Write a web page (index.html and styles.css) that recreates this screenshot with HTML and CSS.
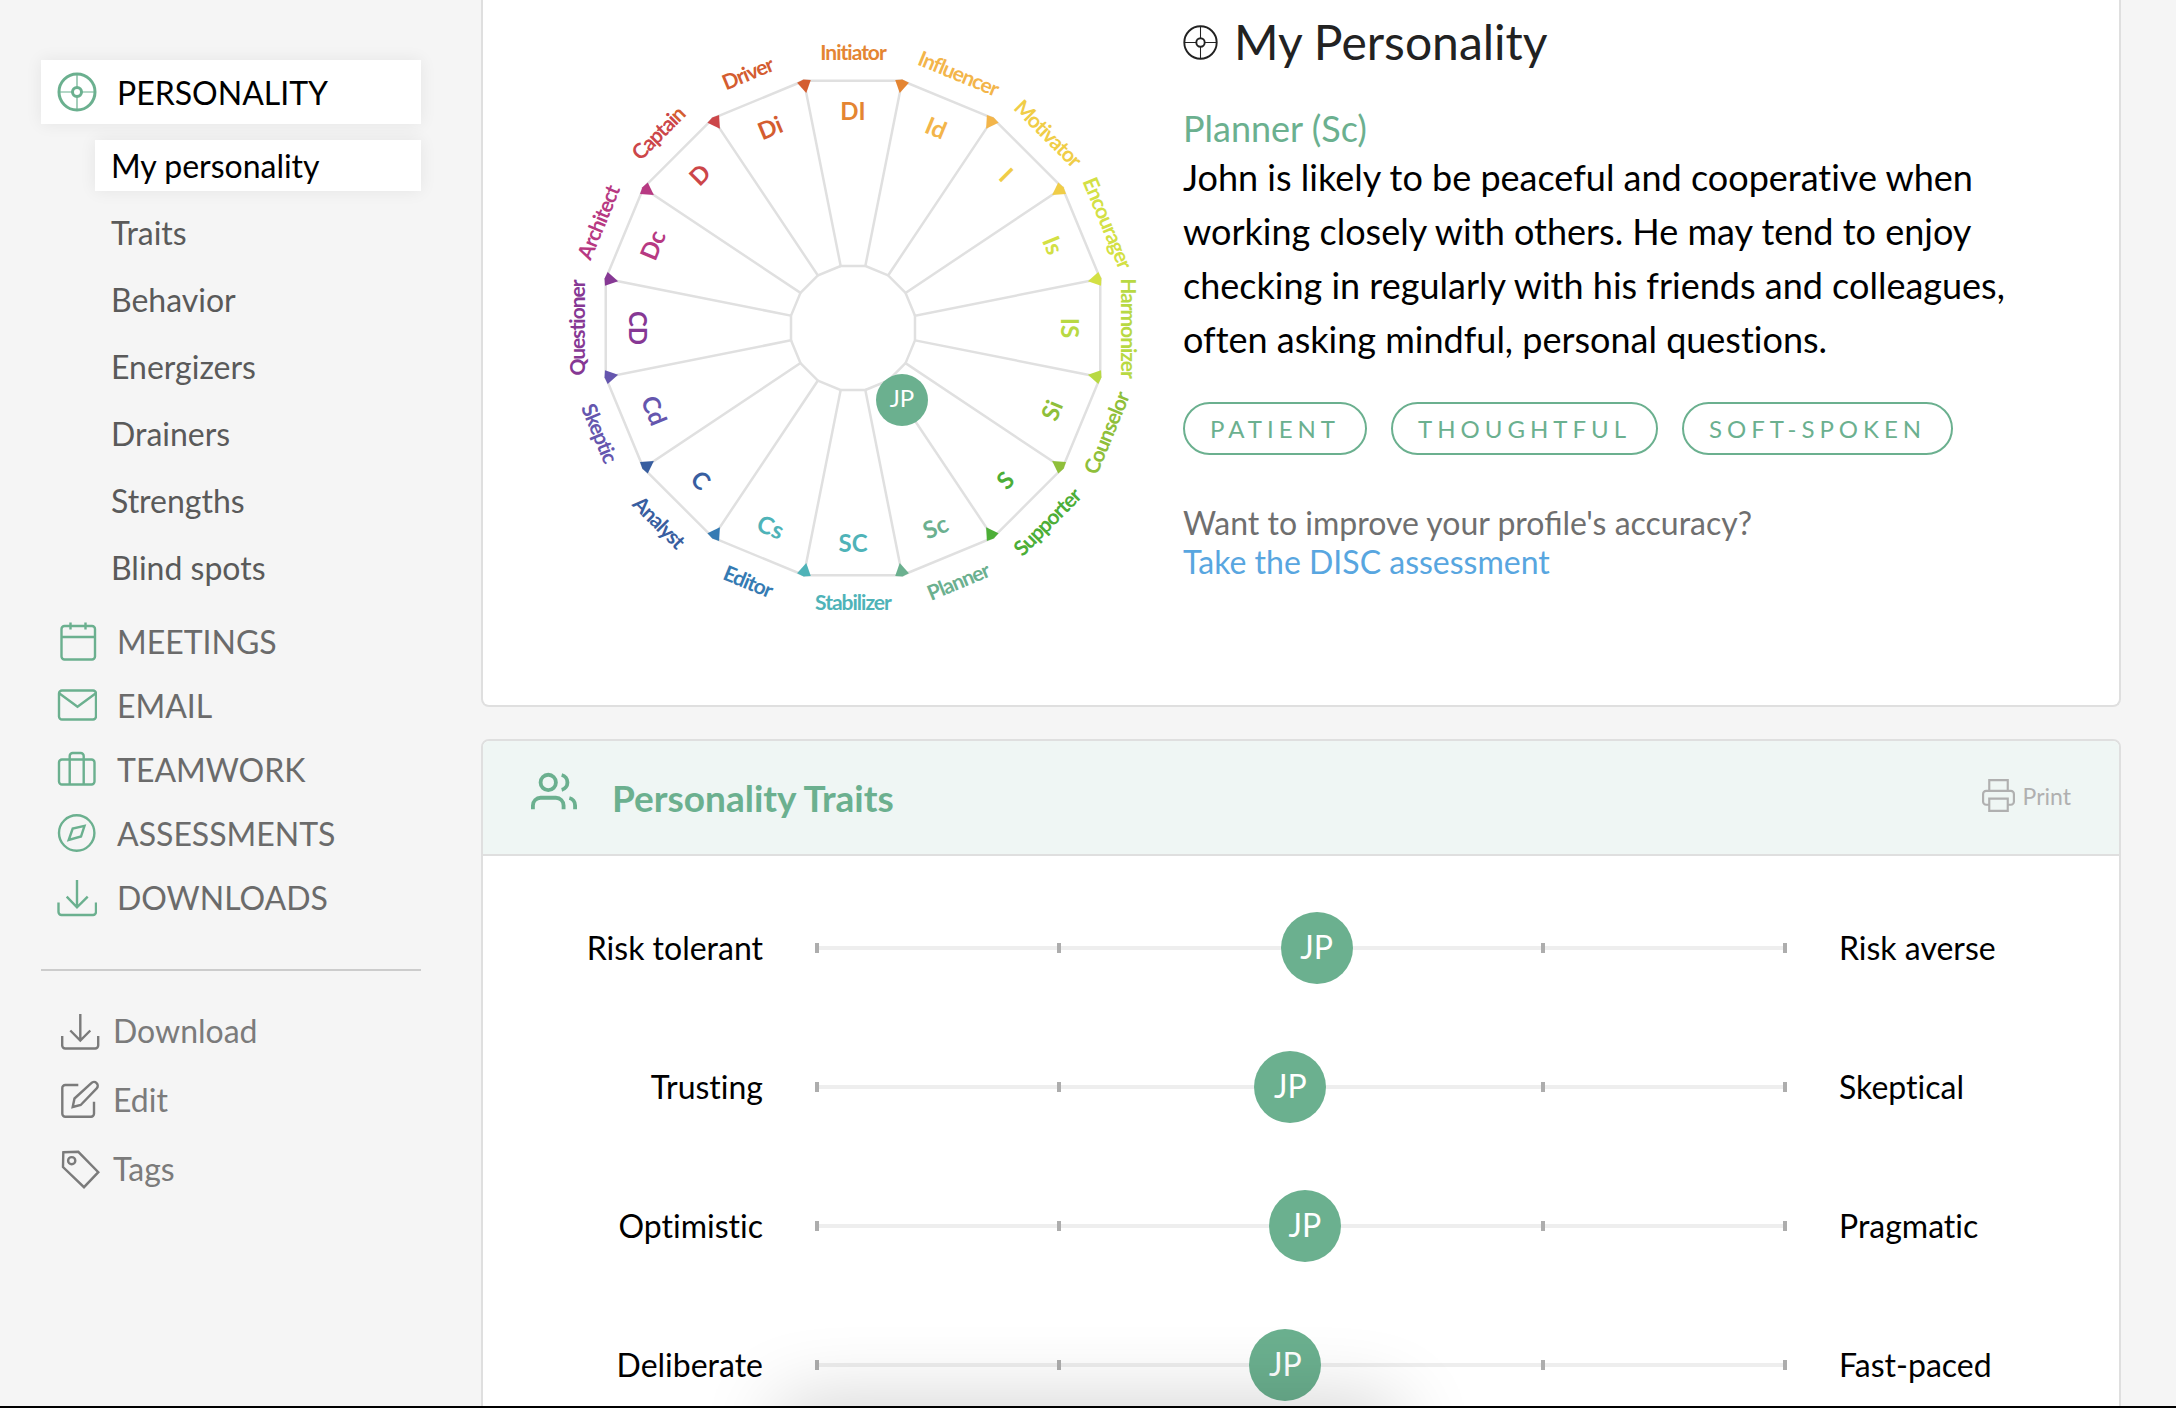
FILE: index.html
```html
<!DOCTYPE html>
<html lang="en">
<head>
<meta charset="utf-8">
<title>My Personality</title>
<link rel="stylesheet" href="styles.css">
</head>
<body>
<div class="page">
  <aside class="sidebar">
    <nav class="nav" aria-label="Profile sections">
      <a class="nav-item active" href="#personality">
        <svg class="icon target" viewBox="0 0 40 40" aria-hidden="true"><circle cx="20" cy="20" r="18"/><circle cx="20" cy="20" r="4.500"/><path class="thin" d="M20 2v13M20 25v13M2 20h13M25 20h13"/></svg>
        PERSONALITY</a>
      <div class="subnav">
        <a class="sub-item active" href="#my-personality">My personality</a>
        <a class="sub-item" href="#traits">Traits</a>
        <a class="sub-item" href="#behavior">Behavior</a>
        <a class="sub-item" href="#energizers">Energizers</a>
        <a class="sub-item" href="#drainers">Drainers</a>
        <a class="sub-item" href="#strengths">Strengths</a>
        <a class="sub-item" href="#blind-spots">Blind spots</a>
      </div>
      <a class="nav-item" href="#meetings">
        <svg class="icon" viewBox="0 0 40 40" aria-hidden="true"><rect x="4.500" y="5" width="33.500" height="33.500" rx="3"/><path d="M13.500 1.500v7M28.500 1.500v7M4.500 16H38"/></svg>
        MEETINGS</a>
      <a class="nav-item" href="#email">
        <svg class="icon" viewBox="0 0 40 40" aria-hidden="true"><rect x="2" y="5.500" width="37" height="29" rx="3"/><path d="M2.500 8.500l18 13.300 18-13.300"/></svg>
        EMAIL</a>
      <a class="nav-item" href="#teamwork">
        <svg class="icon" viewBox="0 0 40 40" aria-hidden="true"><rect x="2" y="10.500" width="35.500" height="25" rx="3"/><path d="M12.700 35.500V7a3 3 0 0 1 3-3h8a3 3 0 0 1 3 3v28.500"/></svg>
        TEAMWORK</a>
      <a class="nav-item" href="#assessments">
        <svg class="icon" viewBox="0 0 40 40" aria-hidden="true"><circle cx="19.700" cy="20" r="17.700"/><path d="M27.500 12.800L15.700 15.500l-4 11.500L24 23.500z"/></svg>
        ASSESSMENTS</a>
      <a class="nav-item" href="#downloads">
        <svg class="icon" viewBox="0 0 40 40" aria-hidden="true"><path d="M20 3v27M9.700 19.600L20 30.300l10.700-10.700M1.500 25.500V35a3 3 0 0 0 3 3H36a3 3 0 0 0 3-3v-9.500"/></svg>
        DOWNLOADS</a>
    </nav>
    <hr class="divider">
    <div class="actions">
      <a class="action" href="#download">
        <svg class="icon" viewBox="0 0 40 40" aria-hidden="true"><path d="M20.300 3v26.500M10.300 19.500l10 10 10-10M2.200 25v9.500a3 3 0 0 0 3 3h30a3 3 0 0 0 3-3V25"/></svg>
        Download</a>
      <a class="action" href="#edit">
        <svg class="icon" viewBox="0 0 40 40" aria-hidden="true"><path d="M18.300 5H5.300a3 3 0 0 0-3 3v25.700a3 3 0 0 0 3 3H31a3 3 0 0 0 3-3v-12"/><path d="M12.700 27l1.800-8.500L31.300 3.200a3.700 3.700 0 0 1 5.400 5.200L20.700 25z"/></svg>
        Edit</a>
      <a class="action" href="#tags">
        <svg class="icon" viewBox="0 0 40 40" aria-hidden="true"><path d="M3.300 3.300l15-.5 20 20.400L24 38.200 3 18z"/><circle cx="11.700" cy="11.700" r="3.600"/></svg>
        Tags</a>
    </div>
  </aside>

  <main class="main">
    <section class="card intro" id="my-personality">
      <svg class="wheel" viewBox="-310 -310 620 620" role="img" aria-label="DISC personality wheel">
        <defs>
          <path id="spoke" d="M24.200 -58.400L0 -63.200V-252.100L96.500 -232.900"/>
          <path id="marker" d="M-7 -251.500L0 -253.300L7 -251.500L0 -239.500z"/>
        </defs>
        <g class="grid">
          <use href="#spoke" transform="rotate(11.25)"/><use href="#spoke" transform="rotate(33.75)"/>
          <use href="#spoke" transform="rotate(56.25)"/><use href="#spoke" transform="rotate(78.75)"/>
          <use href="#spoke" transform="rotate(101.25)"/><use href="#spoke" transform="rotate(123.75)"/>
          <use href="#spoke" transform="rotate(146.25)"/><use href="#spoke" transform="rotate(168.75)"/>
          <use href="#spoke" transform="rotate(191.25)"/><use href="#spoke" transform="rotate(213.75)"/>
          <use href="#spoke" transform="rotate(236.25)"/><use href="#spoke" transform="rotate(258.75)"/>
          <use href="#spoke" transform="rotate(281.25)"/><use href="#spoke" transform="rotate(303.75)"/>
          <use href="#spoke" transform="rotate(326.25)"/><use href="#spoke" transform="rotate(348.75)"/>
        </g>
        <use href="#marker" class="initiator" transform="rotate(11.25)"/>
        <use href="#marker" class="influencer" transform="rotate(33.75)"/>
        <use href="#marker" class="motivator" transform="rotate(56.25)"/>
        <use href="#marker" class="encourager" transform="rotate(78.75)"/>
        <use href="#marker" class="harmonizer" transform="rotate(101.25)"/>
        <use href="#marker" class="counselor" transform="rotate(123.75)"/>
        <use href="#marker" class="supporter" transform="rotate(146.25)"/>
        <use href="#marker" class="planner" transform="rotate(168.75)"/>
        <use href="#marker" class="stabilizer" transform="rotate(191.25)"/>
        <use href="#marker" class="editor" transform="rotate(213.75)"/>
        <use href="#marker" class="analyst" transform="rotate(236.25)"/>
        <use href="#marker" class="skeptic" transform="rotate(258.75)"/>
        <use href="#marker" class="questioner" transform="rotate(281.25)"/>
        <use href="#marker" class="architect" transform="rotate(303.75)"/>
        <use href="#marker" class="captain" transform="rotate(326.25)"/>
        <use href="#marker" class="driver" transform="rotate(348.75)"/>
        <g class="names">
          <text class="initiator" transform="translate(0 -275)" y="7">Initiator</text>
          <text class="influencer" transform="rotate(22.5) translate(0 -275)" y="7">Influencer</text>
          <text class="motivator" transform="rotate(45) translate(0 -275)" y="7">Motivator</text>
          <text class="encourager" transform="rotate(67.5) translate(0 -275)" y="7">Encourager</text>
          <text class="harmonizer" transform="rotate(90) translate(0 -275)" y="7">Harmonizer</text>
          <text class="counselor" transform="rotate(112.5) translate(0 -275) rotate(180)" y="7">Counselor</text>
          <text class="supporter" transform="rotate(135) translate(0 -275) rotate(180)" y="7">Supporter</text>
          <text class="planner" transform="rotate(157.5) translate(0 -275) rotate(180)" y="7">Planner</text>
          <text class="stabilizer" transform="rotate(180) translate(0 -275) rotate(180)" y="7">Stabilizer</text>
          <text class="editor" transform="rotate(202.5) translate(0 -275) rotate(180)" y="7">Editor</text>
          <text class="analyst" transform="rotate(225) translate(0 -275) rotate(180)" y="7">Analyst</text>
          <text class="skeptic" transform="rotate(247.5) translate(0 -275) rotate(180)" y="7">Skeptic</text>
          <text class="questioner" transform="rotate(270) translate(0 -275)" y="7">Questioner</text>
          <text class="architect" transform="rotate(292.5) translate(0 -275)" y="7">Architect</text>
          <text class="captain" transform="rotate(315) translate(0 -275)" y="7">Captai<tspan class="driver">n</tspan></text>
          <text class="driver" transform="rotate(337.5) translate(0 -275)" y="7">Driver</text>
        </g>
        <g class="codes">
          <text class="initiator" transform="translate(0 -216)" y="8">DI</text>
          <text class="influencer" transform="rotate(22.5) translate(0 -216)" y="8">Id</text>
          <text class="motivator" transform="rotate(45) translate(0 -216)" y="8">I</text>
          <text class="encourager" transform="rotate(67.5) translate(0 -216)" y="8">Is</text>
          <text class="harmonizer" transform="rotate(90) translate(0 -216)" y="8">IS</text>
          <text class="counselor" transform="rotate(112.5) translate(0 -216) rotate(180)" y="8">Si</text>
          <text class="supporter" transform="rotate(135) translate(0 -216) rotate(180)" y="8">S</text>
          <text class="planner" transform="rotate(157.5) translate(0 -216) rotate(180)" y="8">Sc</text>
          <text class="stabilizer" transform="rotate(180) translate(0 -216) rotate(180)" y="8">SC</text>
          <text class="stabilizer" transform="rotate(202.5) translate(0 -216) rotate(180)" y="8">Cs</text>
          <text class="analyst" transform="rotate(225) translate(0 -216) rotate(180)" y="8">C</text>
          <text class="skeptic" transform="rotate(247.5) translate(0 -216) rotate(180)" y="8">Cd</text>
          <text class="questioner" transform="rotate(270) translate(0 -216) rotate(180)" y="8">CD</text>
          <text class="architect" transform="rotate(292.5) translate(0 -216)" y="8">Dc</text>
          <text class="captain" transform="rotate(315) translate(0 -216)" y="8">D</text>
          <text class="driver" transform="rotate(337.5) translate(0 -216)" y="8">Di</text>
        </g>
        <circle class="person-dot" cx="49" cy="72" r="26"/>
        <text class="person-text" x="49" y="79">JP</text>
      </svg>

      <div class="summary">
        <h1 class="title">
          <svg class="title-icon" viewBox="0 0 40 40" aria-hidden="true"><circle cx="20" cy="20" r="18.500"/><circle cx="20" cy="20" r="4.800"/><path class="thin" d="M20 2v13M20 25v13M2 20h13M25 20h13"/></svg>
          My Personality</h1>
        <h2 class="type">Planner (Sc)</h2>
        <p class="description">John is likely to be peaceful and cooperative when working closely with others. He may tend to enjoy checking in regularly with his friends and colleagues, often asking mindful, personal questions.</p>
        <ul class="tags">
          <li class="tag">PATIENT</li>
          <li class="tag">THOUGHTFUL</li>
          <li class="tag">SOFT-SPOKEN</li>
        </ul>
        <p class="improve">Want to improve your profile's accuracy?<br><a href="#disc">Take the DISC assessment</a></p>
      </div>
    </section>

    <section class="card" id="traits">
      <header class="card-header">
        <svg class="users" viewBox="0 0 24 24" aria-hidden="true"><path d="M17 21v-2a4 4 0 0 0-4-4H5a4 4 0 0 0-4 4v2"/><circle cx="9" cy="7" r="4"/><path d="M23 21v-2a4 4 0 0 0-3-3.870M16 3.130a4 4 0 0 1 0 7.750"/></svg>
        <h2 class="card-title">Personality Traits</h2>
        <button class="print" type="button">
          <svg class="print-icon" viewBox="0 0 24 24" aria-hidden="true"><path d="M6 9V2h12v7M6 18H4a2 2 0 0 1-2-2v-5a2 2 0 0 1 2-2h16a2 2 0 0 1 2 2v5a2 2 0 0 1-2 2h-2"/><path d="M6 14h12v8H6z"/></svg>
          Print</button>
      </header>
      <div class="traits">
        <div class="trait">
          <span class="low">Risk tolerant</span>
          <div class="track"><i></i><i></i><i></i><i></i><i></i><span class="knob" style="left:51.6%">JP</span></div>
          <span>Risk averse</span>
        </div>
        <div class="trait">
          <span class="low">Trusting</span>
          <div class="track"><i></i><i></i><i></i><i></i><i></i><span class="knob" style="left:48.9%">JP</span></div>
          <span>Skeptical</span>
        </div>
        <div class="trait">
          <span class="low">Optimistic</span>
          <div class="track"><i></i><i></i><i></i><i></i><i></i><span class="knob" style="left:50.4%">JP</span></div>
          <span>Pragmatic</span>
        </div>
        <div class="trait">
          <span class="low">Deliberate</span>
          <div class="track"><i></i><i></i><i></i><i></i><i></i><span class="knob" style="left:48.4%">JP</span></div>
          <span>Fast-paced</span>
        </div>
      </div>
    </section>
  </main>
</div>
<div class="dock-shadow"></div>
<div class="screen-edge"></div>
</body>
</html>
```
FILE: styles.css
```css
:root {
  --green: #6bb08f;
  --line: #dfdfdf;
}

* {
  box-sizing: border-box;
}

body {
  margin: 0;
  background: #f5f5f5;
  color: #000;
  font-family: Lato, sans-serif;
  font-size: 32px;
  overflow: hidden;
}

h1, h2, p, ul {
  margin: 0;
  padding: 0;
  font-weight: 400;
}

a {
  color: inherit;
  text-decoration: none;
}

svg {
  flex: none;
  fill: none;
  stroke: currentColor;
}

.page {
  display: grid;
  grid-template-columns: 380px minmax(0, 1fr);
  gap: 60px;
  height: 100vh;
  padding: 0 55px 0 41px;
  overflow: hidden;
}

/* Sidebar */
.sidebar {
  padding-top: 60px;
}

.nav-item {
  display: flex;
  align-items: center;
  gap: 20px;
  height: 64px;
  padding-left: 16px;
  color: #6b6b6b;
}

.nav-item.active,
.sub-item.active {
  background: #fff;
  color: #000;
  box-shadow: 0 0 16px rgba(0, 0, 0, 0.07);
}

.icon {
  width: 40px;
  height: 40px;
  stroke-width: 2.4;
}

.nav .icon {
  color: var(--green);
}

.icon.target {
  stroke-width: 3;
}

.icon .thin,
.title-icon .thin {
  stroke-width: 1.2;
}

.subnav {
  display: flex;
  flex-direction: column;
  gap: 16px;
  margin: 16px 0 16px 54px;
}

.sub-item {
  padding-left: 16px;
  color: #5a5a5a;
  line-height: 51px;
}

.divider {
  height: 2px;
  margin: 40px 0 25px;
  border: 0;
  background: #ccc;
}

.action {
  display: flex;
  align-items: center;
  gap: 13px;
  height: 69px;
  padding-left: 19px;
  color: #7b7b7b;
}

/* Cards */
.card {
  margin-bottom: 32px;
  border: 2px solid var(--line);
  border-radius: 8px;
  background: #fff;
  overflow: hidden;
}

.intro {
  display: grid;
  grid-template-columns: 620px minmax(0, 1fr);
  gap: 20px;
  padding: 18px 70px 67px 60px;
  border-top: 0;
  border-radius: 0 0 8px 8px;
}

/* Wheel */
.wheel {
  width: 620px;
  height: 620px;
  stroke: none;
}

.wheel .grid {
  stroke: #e0e0e0;
  stroke-width: 2.5;
}

.wheel text {
  text-anchor: middle;
}

.names {
  font-size: 21px;
  font-weight: 700;
  letter-spacing: -1px;
}

.codes {
  font-size: 24px;
  font-weight: 700;
}

.initiator { fill: #e48532; }
.influencer { fill: #f3b54a; }
.motivator { fill: #f0cd47; }
.encourager { fill: #d3e044; }
.harmonizer { fill: #b8d943; }
.counselor { fill: #8fbf3a; }
.supporter { fill: #4cae37; }
.planner { fill: #6bb08f; }
.stabilizer { fill: #4fb3b8; }
.editor { fill: #357bb3; }
.analyst { fill: #385ea0; }
.skeptic { fill: #6556ae; }
.questioner { fill: #863894; }
.architect { fill: #b73982; }
.captain { fill: #cc4649; }
.driver { fill: #d45d30; }

.person-dot {
  fill: var(--green);
}

.person-text {
  fill: #fff;
  font-size: 24px;
}

/* Summary */
.title {
  display: flex;
  align-items: center;
  gap: 16px;
  margin-bottom: 40px;
  color: #222;
  font-size: 48px;
  line-height: 48px;
}

.title-icon {
  width: 35px;
  height: 35px;
  stroke-width: 2.2;
}

.type {
  color: var(--green);
  font-size: 36px;
  line-height: 44px;
}

.description {
  font-size: 36px;
  line-height: 54px;
  font-variant-ligatures: no-common-ligatures;
}

.tags {
  display: flex;
  gap: 24px;
  margin: 36px 0 48px;
  list-style: none;
}

.tag {
  padding: 0 25px;
  border: 2px solid var(--green);
  border-radius: 27px;
  color: var(--green);
  font-size: 24px;
  line-height: 49px;
  letter-spacing: 5px;
}

.improve {
  color: #6f6f6f;
  line-height: 39px;
}

.improve a {
  color: #58a6e0;
}

/* Traits */
.card-header {
  display: flex;
  align-items: center;
  height: 115px;
  padding: 0 48px;
  border-bottom: 2px solid var(--line);
  background: #eff6f4;
  color: var(--green);
}

.users {
  width: 46px;
  height: 46px;
  margin-bottom: 11px;
  stroke-width: 2;
}

.card-title {
  margin-left: 35px;
  font-size: 37px;
  font-weight: 700;
}

.print {
  display: flex;
  align-items: center;
  gap: 6px;
  margin: 0 0 4px auto;
  padding: 0;
  border: 0;
  background: none;
  color: #b0b0b0;
  font: 23px/26px Lato, sans-serif;
}

.print-icon {
  width: 37px;
  height: 37px;
  stroke-width: 1.4;
}

.traits {
  padding: 22px 0;
  font-variant-ligatures: no-common-ligatures;
}

.trait {
  display: grid;
  grid-template-columns: 280px minmax(0, 1fr) 280px;
  gap: 52px;
  align-items: center;
  height: 139px;
}

.low {
  text-align: right;
}

.track {
  position: relative;
  display: flex;
  justify-content: space-between;
  background: linear-gradient(#eee, #eee) center / 100% 4px no-repeat;
}

.track i {
  width: 4px;
  height: 10px;
  background: #adadad;
}

.knob {
  position: absolute;
  top: 50%;
  width: 72px;
  height: 72px;
  border-radius: 50%;
  background: var(--green);
  color: #fff;
  line-height: 69px;
  text-align: center;
  transform: translate(-50%, -50%);
}

/* Soft shadow cast over the page by the bar below the window */
.dock-shadow {
  position: fixed;
  top: 100%;
  left: 36%;
  width: 28%;
  height: 60px;
  box-shadow: 0 0 80px 4px rgba(0, 0, 0, 0.2);
}

.screen-edge {
  position: fixed;
  right: 0;
  bottom: 0;
  left: 0;
  height: 2px;
  background: #000;
}
```
